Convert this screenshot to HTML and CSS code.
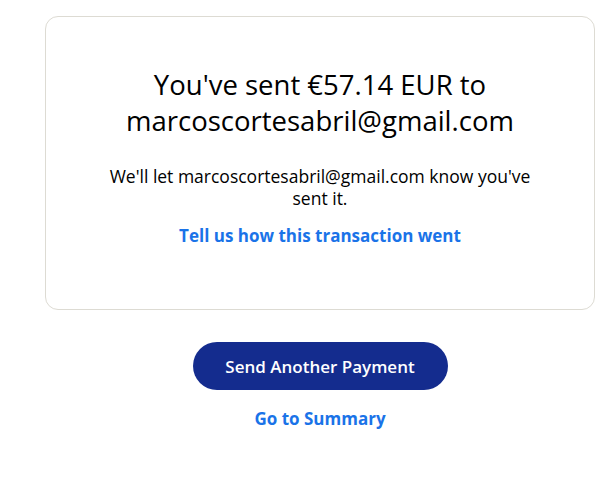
FILE: index.html
```html
<!DOCTYPE html>
<html lang="en">
<head>
<meta charset="utf-8">
<title>Payment sent</title>
<link rel="stylesheet" href="styles.css">
</head>
<body>
<main class="page">
  <section class="card">
    <h1 class="title">You've sent €57.14 EUR to marcoscortesabril@gmail.com</h1>
    <p class="note">We'll let marcoscortesabril@gmail.com know you've sent it.</p>
    <a class="link" href="#">Tell us how this transaction went</a>
  </section>
  <div class="actions">
    <a class="btn" href="#">Send Another Payment</a>
    <a class="link summary" href="#">Go to Summary</a>
  </div>
</main>
</body>
</html>
```

FILE: styles.css
```css
* { box-sizing: border-box; }
html, body { margin: 0; padding: 0; background: #ffffff; }
body {
  font-family: "Open Sans", "Noto Sans", "Liberation Sans", sans-serif;
  color: #000000;
}
.page {
  width: 550px;
  margin-left: 45px;
  padding-top: 16px;
}
.card {
  border: 1px solid #dddbd3;
  border-radius: 13px;
  height: 294px;
  padding: 50px 40px 0;
  display: flex;
  flex-direction: column;
  align-items: center;
  text-align: center;
}
.title {
  margin: 0;
  font-size: 27.5px;
  line-height: 36px;
  font-weight: 400;
  max-width: 420px;
}
.note {
  margin: 26px 0 0;
  font-size: 17.5px;
  line-height: 22px;
  max-width: 440px;
}
.link {
  color: #1a73e8;
  font-weight: 700;
  font-size: 17px;
  line-height: 22px;
  text-decoration: none;
  margin-top: 16px;
}
.actions {
  display: flex;
  flex-direction: column;
  align-items: center;
  padding-top: 32px;
}
.btn {
  display: flex;
  align-items: center;
  justify-content: center;
  width: 255px;
  height: 48px;
  border-radius: 24px;
  background: #142c8e;
  color: #ffffff;
  font-weight: 600;
  font-size: 17px;
  text-decoration: none;
}
.summary { margin-top: 18px; }
```
